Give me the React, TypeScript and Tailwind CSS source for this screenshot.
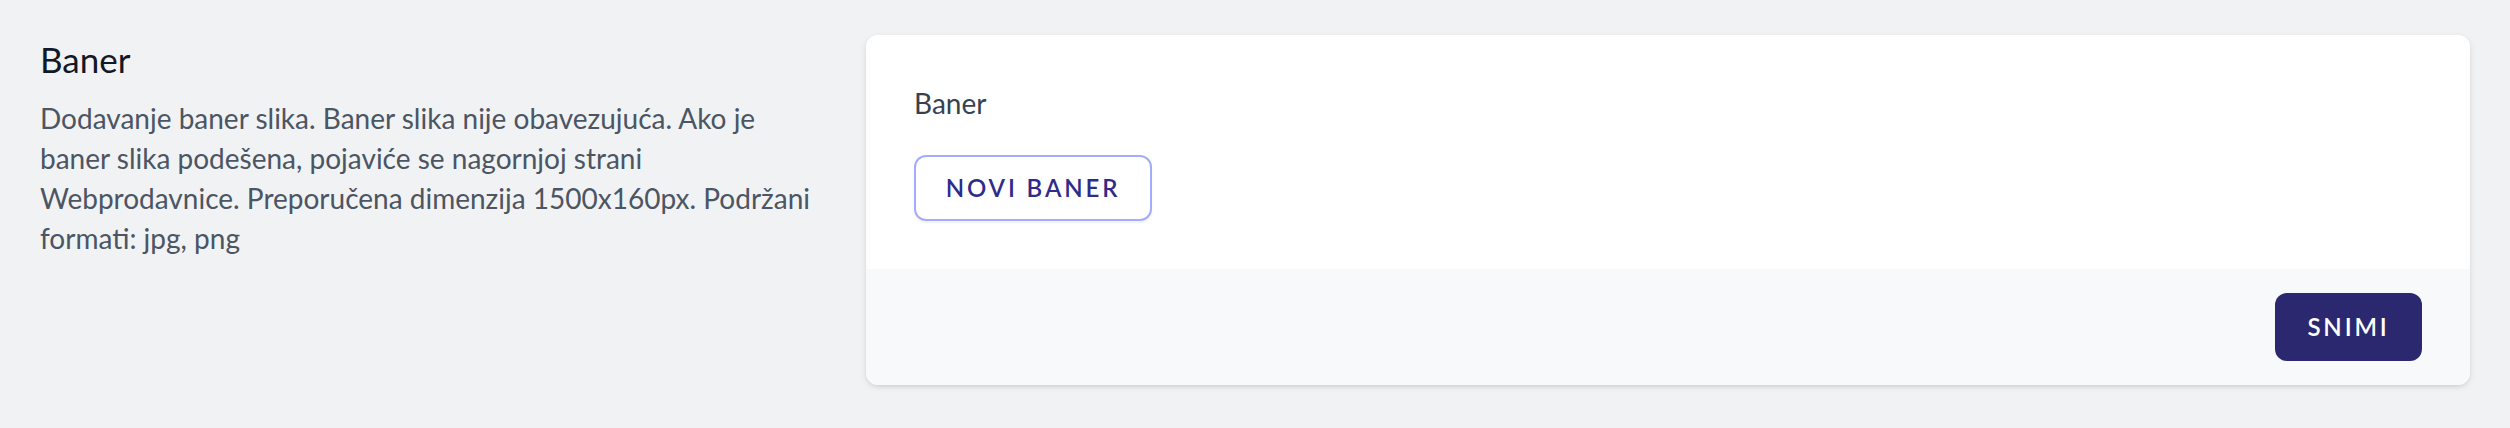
import React from "react";

export default function App() {
  const font = { fontFamily: "Lato, 'Noto Sans', sans-serif" };
  return (
    <div
      className="min-h-[428px] w-full bg-[#f1f2f4] px-[40px] pt-[35px]"
      style={font}
    >
      <div className="grid grid-cols-3 gap-[48px]">
        <div className="col-span-1">
          <h3 className="text-[35px] leading-[48px] font-normal text-[#111827]">
            Baner
          </h3>
          <p className="mt-[15px] text-[28px] leading-[40px] text-[#4b5563]">
            <span className="block whitespace-nowrap">
              Dodavanje baner slika. Baner slika nije obavezujuća. Ako je
            </span>
            <span className="block whitespace-nowrap">
              baner slika podešena, pojaviće se nagornjoj strani
            </span>
            <span className="block whitespace-nowrap">
              Webprodavnice. Preporučena dimenzija 1500x160px. Podržani
            </span>
            <span className="block whitespace-nowrap">formati: jpg, png</span>
          </p>
        </div>
        <div className="col-span-2 rounded-[12px] shadow-[0_2px_6px_0_rgba(0,0,0,0.1),0_2px_4px_-2px_rgba(0,0,0,0.1)]">
          <div className="rounded-t-[12px] bg-white p-[48px]">
            <label className="block text-[28px] leading-[40px] text-[#374151]">
              Baner
            </label>
            <button className="mt-[32px] flex h-[66px] w-[238px] items-center justify-center rounded-[12px] border-2 border-[#a3adf9] bg-white text-[24px] font-semibold uppercase tracking-[0.12em] text-[#2f2b8a] shadow-[0_2px_2px_0_rgba(0,0,0,0.05)]">
              Novi baner
            </button>
          </div>
          <div className="flex items-center justify-end rounded-b-[12px] bg-[#f8f9fa] px-[48px] py-[24px]">
            <button className="flex h-[68px] w-[147px] items-center justify-center rounded-[12px] bg-[#2c2870] text-[24px] font-semibold uppercase tracking-[0.12em] text-white">
              Snimi
            </button>
          </div>
        </div>
      </div>
    </div>
  );
}
